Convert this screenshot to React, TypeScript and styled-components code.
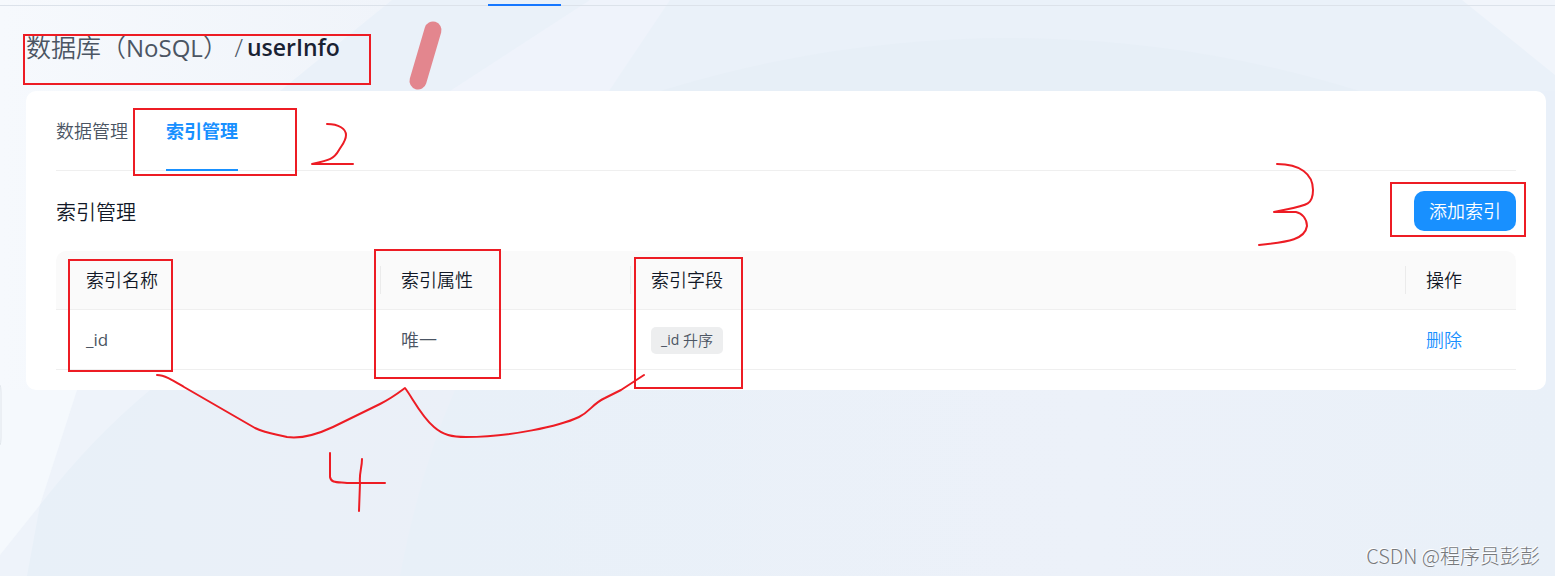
import React from "react";
import styled, { createGlobalStyle } from "styled-components";

const GlobalStyle = createGlobalStyle`
  * { box-sizing: border-box; }
  body {
    margin: 0;
    background: #ecf1f9;
    font-family: "Open Sans", "Noto Sans CJK SC", sans-serif;
    font-size: 18px;
    font-weight: 350;
    color: #4b5563;
  }
  button { font: inherit; cursor: pointer; }
`;

const Page = styled.div`
  position: relative;
  min-height: 100vh;
  display: flex;
  flex-direction: column;
  overflow: hidden;
`;

const Backdrop = styled.svg`
  position: absolute;
  inset: 0;
  width: 100%;
  height: 100%;
  z-index: -1;
`;

const TopNav = styled.nav`
  height: 6px;
  padding-left: 488px;
  display: flex;
  align-items: flex-end;
  box-shadow: inset 0 -1px #dce2ea;
`;

const NavIndicator = styled.span`
  width: 73px;
  height: 2px;
  background: #1677ff;
`;

const Main = styled.main`
  flex: 1;
  display: flex;
  flex-direction: column;
  padding: 22px 9px 20px 26px;
`;

const Breadcrumb = styled.h1`
  display: flex;
  gap: 4px;
  margin: 0;
  height: 63px;
  font-size: 25px;
  line-height: 38px;
  font-weight: 350;
  white-space: pre;
`;

const Latin = styled.span<{ $size: number }>`
  font-size: ${(p) => p.$size}px;
  font-weight: 400;
`;

const Current = styled.strong`
  font-size: 23px;
  font-weight: 600;
  color: #1a2233;
`;

const Card = styled.section`
  background: #fff;
  border-radius: 10px;
  padding: 0 30px 20px;
`;

const Tabs = styled.div`
  display: flex;
  gap: 38px;
  height: 80px;
  border-bottom: 1px solid #efefef;
`;

const Tab = styled.button<{ $active?: boolean }>`
  height: 80px;
  padding: 2px 0 0;
  border: 0;
  border-bottom: 2px solid ${(p) => (p.$active ? "#1890ff" : "transparent")};
  background: none;
  line-height: 40px;
  color: ${(p) => (p.$active ? "#1890ff" : "inherit")};
  font-weight: ${(p) => (p.$active ? 700 : 350)};
`;

const Toolbar = styled.div`
  display: flex;
  align-items: center;
  justify-content: space-between;
  height: 80px;
`;

const Heading = styled.h2`
  margin: 0;
  font-size: 20px;
  font-weight: 350;
  color: #111827;
`;

const AddButton = styled.button`
  height: 40px;
  padding: 0 15px 2px;
  border: 0;
  border-radius: 10px;
  background: #1890ff;
  color: #fff;
`;

const Table = styled.table`
  width: 100%;
  table-layout: fixed;
  border-collapse: separate;
  border-spacing: 0;
  text-align: left;
`;

const HeadCell = styled.th<{ $width?: number }>`
  position: relative;
  width: ${(p) => (p.$width ? `${p.$width}px` : "auto")};
  height: 59px;
  padding: 0 0 2px 20px;
  background: #fafafa;
  border-bottom: 1px solid #efefef;
  color: #111827;
  font-weight: 350;

  &:first-child { padding-left: 30px; border-top-left-radius: 10px; }
  &:last-child { border-top-right-radius: 10px; }
  &:not(:last-child)::after {
    content: "";
    position: absolute;
    right: 0;
    top: 15px;
    width: 1px;
    height: 28px;
    background: #ebebeb;
  }
`;

const Cell = styled.td<{ $tagged?: boolean }>`
  height: 60px;
  padding: ${(p) => (p.$tagged ? "2px 0 0 20px" : "0 0 2px 20px")};
  border-bottom: 1px solid #efefef;

  &:first-child { padding-left: 30px; }
`;

const Tag = styled.span`
  display: inline-flex;
  align-items: center;
  height: 27px;
  padding: 0 10px 2px;
  border-radius: 5px;
  background: #edeeef;
  font-size: 15px;
  vertical-align: middle;
  white-space: pre;
`;

const DeleteLink = styled.a`
  color: #1890ff;
  text-decoration: none;
`;

const Watermark = styled.footer`
  position: absolute;
  right: 15px;
  bottom: 5px;
  font-family: "Noto Sans CJK SC", sans-serif;
  font-size: 20px;
  font-weight: 300;
  line-height: 30px;
  color: #77797c;
  text-shadow: -1px -1px #fff;
`;

const Marks = styled.svg<{ $side: "left" | "right" }>`
  position: absolute;
  top: 0;
  ${(p) => p.$side}: 0;
  pointer-events: none;
  fill: none;
  stroke: #ed1c24;
  stroke-width: 2;
  stroke-linecap: round;
  stroke-linejoin: round;
`;

const columns = [
  { title: "索引名称", width: 325 },
  { title: "索引属性", width: 250 },
  { title: "索引字段" },
  { title: "操作", width: 110 },
];

const rows = [{ name: "_id", kind: "唯一", field: "_id", order: "升序" }];

export default function App() {
  return (
    <Page>
      <GlobalStyle />
      <Backdrop viewBox="0 0 1555 576" preserveAspectRatio="none" aria-hidden="true">
        <defs>
          <linearGradient id="base" x1="0" y1="0" x2="1" y2="0">
            <stop offset="0" stopColor="#f6f9fd" />
            <stop offset="0.25" stopColor="#f0f4fa" />
            <stop offset="1" stopColor="#ecf1f9" />
          </linearGradient>
          <linearGradient id="shade" x1="0" y1="0" x2="1" y2="0">
            <stop offset="0" stopColor="#e8f0f8" />
            <stop offset="0.28" stopColor="#ebf0f8" />
            <stop offset="0.7" stopColor="#ecf1f9" />
            <stop offset="1" stopColor="#e9f0f8" />
          </linearGradient>
          <linearGradient id="fade" x1="0" y1="0" x2="1" y2="0">
            <stop offset="0" stopColor="#e8f0f8" />
            <stop offset="1" stopColor="#e8f0f8" stopOpacity="0" />
          </linearGradient>
        </defs>
        <rect width="1555" height="576" fill="url(#base)" />
        <path d="M392 0H1555V576H280V91Z" fill="#eaf1f9" />
        <path d="M590 0 450 91H609L670 0Z" fill="#eff3fb" />
        <circle cx="1010" cy="1220" r="1182" fill="#e7eff7" />
        <path d="M1462 0H1555V75Z" fill="#f1f5fb" />
        <path d="M1530 91H1555V576H1530Z" fill="#e9f0f9" />
        <path d="M0 390H1555V576H0Z" fill="#eef3fa" />
        <path d="M0 390H77L40 505 0 555Z" fill="#f5f9fd" />
        <path d="M150 390Q90 440 40 505L27 576H1555V390Z" fill="url(#shade)" />
        <path d="M455 390H1000V576H400Q420 470 455 390Z" fill="url(#fade)" />
        <path d="M0 385Q1 387 1 392V438Q1 443 0 445" fill="none" stroke="#e1e6ec" />
      </Backdrop>

      <TopNav>
        <NavIndicator />
      </TopNav>

      <Main>
        <Breadcrumb>
          <span>数据库（<Latin $size={24}>NoSQL</Latin>） /</span>
          <Current>userInfo</Current>
        </Breadcrumb>

        <Card>
          <Tabs role="tablist">
            <Tab role="tab" aria-selected={false}>数据管理</Tab>
            <Tab role="tab" aria-selected $active>索引管理</Tab>
          </Tabs>
          <Toolbar>
            <Heading>索引管理</Heading>
            <AddButton type="button">添加索引</AddButton>
          </Toolbar>
          <Table>
            <thead>
              <tr>
                {columns.map((c) => (
                  <HeadCell key={c.title} $width={c.width} scope="col">{c.title}</HeadCell>
                ))}
              </tr>
            </thead>
            <tbody>
              {rows.map((r) => (
                <tr key={r.name}>
                  <Cell><Latin $size={17}>{r.name}</Latin></Cell>
                  <Cell>{r.kind}</Cell>
                  <Cell $tagged>
                    <Tag><Latin $size={14}>{r.field} </Latin>{r.order}</Tag>
                  </Cell>
                  <Cell><DeleteLink href="#delete">删除</DeleteLink></Cell>
                </tr>
              ))}
            </tbody>
          </Table>
        </Card>
      </Main>

      <Watermark>CSDN @程序员彭彭</Watermark>

      <Marks $side="left" width="760" height="530" viewBox="0 0 760 530" aria-hidden="true">
        <g strokeLinejoin="miter">
          <rect x="24" y="35" width="346" height="49" />
          <rect x="134" y="109" width="162" height="66" />
          <rect x="69" y="260" width="103" height="111" />
          <rect x="375" y="250" width="125" height="128" />
          <rect x="635" y="258" width="107" height="130" />
        </g>
        <path d="M433 30 418 81" stroke="#e3868e" strokeWidth="17" />
        <path d="M327 124C339 124 346 129 346 135C346 141 342 145 339 150C334 159 330 160 312 164H353" />
        <path d="M157 375C165 375 174 381 184 387L255 428C268 434 276 434 287 437C301 439 318 434 333 427L380 404C392 398 397 394 405 388C412 397 421 416 434 427C443 435 452 437 466 437C510 437 560 426 579 417C591 411 592 404 605 398L621 390L644 375" />
        <path d="M330 453V477C331 483 337 482 347 483H385M362 459C362 468 359 473 360 483L359 511" />
      </Marks>
      <Marks $side="right" width="305" height="260" viewBox="1250 0 305 260" aria-hidden="true">
        <rect x="1391" y="183" width="134" height="53" strokeLinejoin="miter" />
        <path d="M1277 164C1300 164 1313 174 1313 190C1313 206 1307 205 1274 212H1296C1302 213 1307 219 1307 226C1305 239 1290 242 1259 245" />
      </Marks>
    </Page>
  );
}
